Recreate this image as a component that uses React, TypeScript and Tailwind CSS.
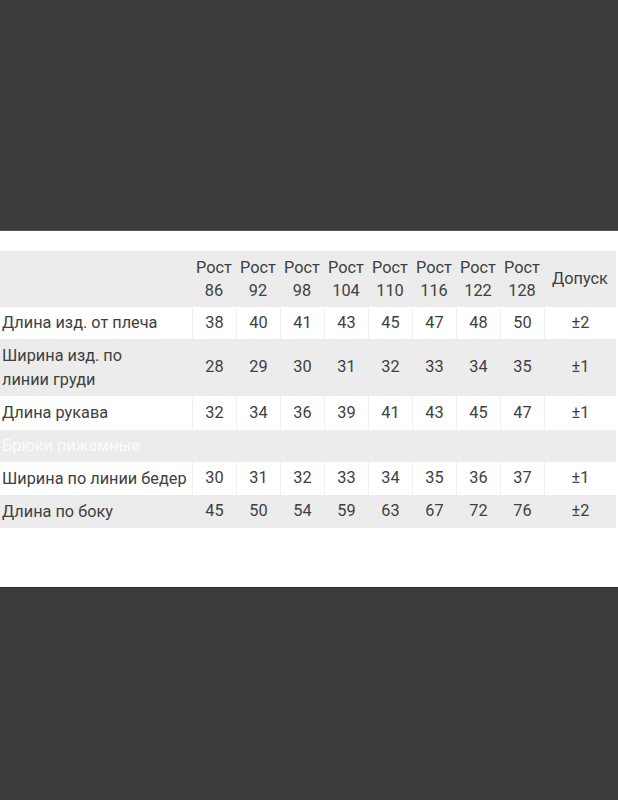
const sizes = ["86", "92", "98", "104", "110", "116", "122", "128"];

type Row = { label: string[]; values: string[]; tol: string; gray: boolean; h: string };

const rows: Row[] = [
  { label: ["Длина изд. от плеча"], values: ["38", "40", "41", "43", "45", "47", "48", "50"], tol: "±2", gray: false, h: "h-[32px]" },
  { label: ["Ширина изд. по", "линии груди"], values: ["28", "29", "30", "31", "32", "33", "34", "35"], tol: "±1", gray: true, h: "h-[57px]" },
  { label: ["Длина рукава"], values: ["32", "34", "36", "39", "41", "43", "45", "47"], tol: "±1", gray: false, h: "h-[34px]" },
];

const rows2: Row[] = [
  { label: ["Ширина по линии бедер"], values: ["30", "31", "32", "33", "34", "35", "36", "37"], tol: "±1", gray: false, h: "h-[33px]" },
  { label: ["Длина по боку"], values: ["45", "50", "54", "59", "63", "67", "72", "76"], tol: "±2", gray: true, h: "h-[33px]" },
];

const grid = "grid grid-cols-[192px_repeat(8,44px)_72px]";

function DataRow({ row }: { row: Row }) {
  const bg = row.gray ? "bg-[#ececec]" : "bg-white";
  const line = row.gray ? "border-transparent" : "border-[#f0f0f0]";
  return (
    <div className={`${grid} ${bg} ${row.h}`}>
      <div className="flex flex-col justify-center pl-[2px] leading-[24px]">
        {row.label.map((l) => (
          <span key={l} className="whitespace-nowrap">{l}</span>
        ))}
      </div>
      {row.values.map((v, i) => (
        <div key={i} className={`flex items-center justify-center border-l ${line}`}>
          {v}
        </div>
      ))}
      <div className={`flex items-center justify-center border-l ${line}`}>{row.tol}</div>
    </div>
  );
}

export default function App() {
  return (
    <div className="w-[618px] h-[800px] flex flex-col bg-[#3b3b3b] font-['Roboto',sans-serif] text-[16.3px] text-[#404040]">
      <div className="h-[230px] shrink-0" />
      <div className="h-[1px] bg-[#555]" />
      <div className="h-[356px] bg-white flex flex-col pt-[20px]">
        <div className="w-[616px]">
          <div className={`${grid} bg-[#ececec] h-[56px]`}>
            <div />
            {sizes.map((s) => (
              <div key={s} className="flex flex-col items-center justify-center leading-[23px]">
                <span>Рост</span>
                <span>{s}</span>
              </div>
            ))}
            <div className="flex items-center justify-center">Допуск</div>
          </div>
          {rows.map((r) => (
            <DataRow key={r.label[0]} row={r} />
          ))}
          <div className="bg-[#ececec] h-[32px] flex items-center pl-[2px] text-[#fafafa]">Брюки пижамные</div>
          {rows2.map((r) => (
            <DataRow key={r.label[0]} row={r} />
          ))}
        </div>
      </div>
      <div className="h-[1px] bg-[#2e2e2e]" />
    </div>
  );
}
